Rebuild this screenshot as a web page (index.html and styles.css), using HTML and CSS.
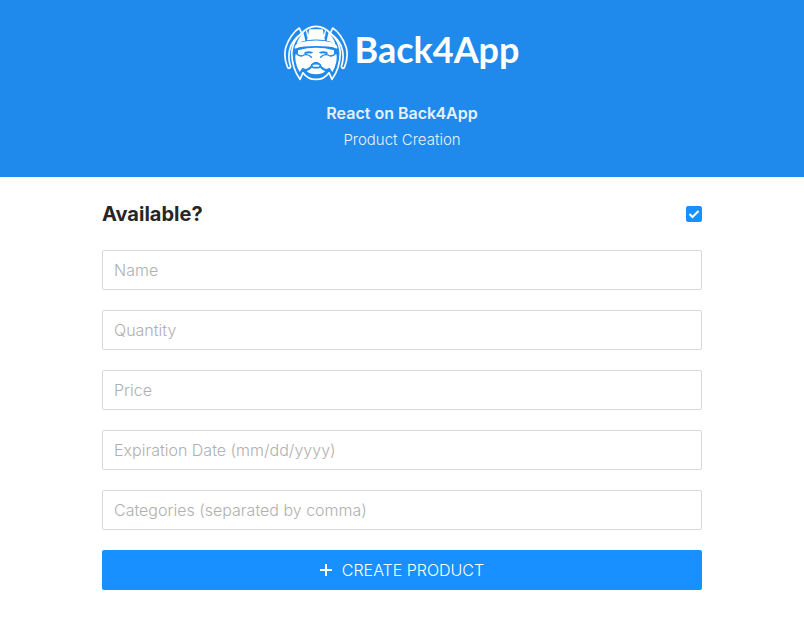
FILE: index.html
```html
<!DOCTYPE html>
<html lang="en">
<head>
    <meta charset="UTF-8">
    <meta name="viewport" content="width=device-width, initial-scale=1.0">
    <title>React on Back4App - Product Creation</title>
    <link rel="stylesheet" href="styles.css">
</head>
<body>
    <header class="header">
        <div class="logo">
            <svg class="logo-icon" viewBox="4 2 192 168" fill="none" stroke="#fff" stroke-width="5" stroke-linecap="round" stroke-linejoin="round" aria-hidden="true">
                <!-- wings -->
                <path d="M57 27L50 11C34 20 16 46 9 70C4 92 8 114 15 130Q21 135 24 127C16 104 17 84 25 64C33 46 44 36 57 27"/>
                <path d="M143 27L150 11C166 20 184 46 191 70C196 92 192 114 185 130Q179 135 176 127C184 104 183 84 175 64C167 46 156 36 143 27"/>
                <!-- head outline -->
                <path d="M57 27C82 -1 118 -1 143 27"/>
                <path d="M57 27C38 42 28 66 27 86C28 122 38 146 52 165L61 145C80 172 120 172 139 145L148 165C162 146 172 122 173 86C172 66 162 42 143 27"/>
                <!-- helmet -->
                <path d="M80 15H120L127 48C110 45 90 45 73 48Z" fill="#fff" stroke="none"/>
                <path d="M63 26L68 49C56 51 48 55 42 60C45 46 52 34 63 26ZM137 26L132 49C144 51 152 55 158 60C155 46 148 34 137 26Z" fill="#fff" stroke="none"/>
                <path d="M72 20L75 36M128 20L125 36" stroke-width="4"/>
                <path d="M38 70C40 62 46 58 54 56C84 49 116 49 146 56C154 58 160 62 162 70C138 60 62 60 38 70Z" fill="#fff"/>
                <!-- face -->
                <path d="M46 78C82 68 118 68 154 78V94H46Z" fill="#fff" stroke="none"/>
                <path d="M68 86Q78 81 88 86M132 86Q122 81 112 86" stroke="#208aec" stroke-width="6"/>
                <!-- moustache -->
                <path d="M38 82C32 106 40 130 51 147L60 133C70 140 82 132 88 122C94 112 106 112 112 122C118 132 130 140 140 133L149 147C160 130 168 106 162 82C158 90 150 95 142 95C130 88 120 92 114 99Q100 92 86 99C80 92 70 88 58 95C50 95 42 90 38 82Z" fill="#fff" stroke="#208aec" stroke-width="4"/>
                <path d="M84 88Q100 78 116 88L112 100Q100 107 88 100Z" fill="#fff" stroke="none"/>
                <!-- mouth and beard -->
                <path d="M72 140C84 138 88 128 94 123H106C112 128 116 138 128 140C118 153 82 153 72 140Z" fill="#fff" stroke="none"/>
                <ellipse cx="100" cy="124" rx="13" ry="6" stroke="#208aec" stroke-width="5" fill="#fff"/>
            </svg>
            <span class="logo-text">Back4App</span>
        </div>
        <h1 class="header-title">React on Back4App</h1>
        <p class="header-subtitle">Product Creation</p>
    </header>

    <main class="container">
        <form class="product-form">
            <div class="available">
                <label for="available">Available?</label>
                <input type="checkbox" id="available" name="available" checked>
            </div>
            <input class="field" type="text" name="name" placeholder="Name" aria-label="Name">
            <input class="field" type="text" name="quantity" placeholder="Quantity" aria-label="Quantity">
            <input class="field" type="text" name="price" placeholder="Price" aria-label="Price">
            <input class="field" type="text" name="expirationDate" placeholder="Expiration Date (mm/dd/yyyy)" aria-label="Expiration Date">
            <input class="field" type="text" name="categories" placeholder="Categories (separated by comma)" aria-label="Categories">
            <button class="create-btn" type="button">
                <svg class="plus-icon" viewBox="0 0 12 12" aria-hidden="true">
                    <path d="M6 0V12M0 6H12" stroke="#fff" stroke-width="2"/>
                </svg>
                CREATE PRODUCT
            </button>
        </form>
    </main>
</body>
</html>
```
FILE: styles.css
```css
* {
    box-sizing: border-box;
}
body {
    font-family: Inter, Roboto, sans-serif;
    font-size: 16px;
    margin: 0;
    background-color: #fff;
    color: #262626;
}
.header {
    background-color: #208aec;
    padding: 25px 20px 24px;
    text-align: center;
    color: #e4f1fd;
}
.logo {
    display: flex;
    justify-content: center;
    align-items: center;
    gap: 6px;
    height: 56px;
}
.logo-icon {
    width: 64px;
    height: 56px;
}
.logo-text {
    font-family: Lato, sans-serif;
    font-size: 36px;
    font-weight: bold;
    line-height: 48px;
    color: #fff;
    padding-bottom: 8px;
}
.header-title {
    margin: 20px 0 0;
    font-size: 16px;
    font-weight: 600;
    line-height: 24px;
}
.header-subtitle {
    margin: 3px 0 1px;
    font-size: 15px;
    font-weight: 300;
    line-height: 24px;
}
.container {
    max-width: 640px;
    margin: 0 auto;
    padding: 20px;
}
.product-form {
    display: flex;
    flex-direction: column;
    gap: 20px;
}
.available {
    display: flex;
    justify-content: space-between;
    align-items: center;
    height: 33px;
    font-size: 20px;
    font-weight: 700;
}
.available input {
    appearance: none;
    width: 16px;
    height: 16px;
    margin: 0;
    border-radius: 2px;
    border: 1px solid #d9d9d9;
    cursor: pointer;
}
.available input:checked {
    border-color: #1890ff;
    background: #1890ff url("data:image/svg+xml,%3Csvg xmlns='http://www.w3.org/2000/svg' viewBox='0 0 14 14'%3E%3Cpath d='M2.5 7L5.5 10L11.5 4' fill='none' stroke='white' stroke-width='2'/%3E%3C/svg%3E") center / 14px no-repeat;
}
.field {
    width: 100%;
    height: 40px;
    padding: 0 11px;
    border: 1px solid #d9d9d9;
    border-radius: 2px;
    font-family: inherit;
    font-size: 16px;
    font-weight: 300;
    color: #262626;
}
.field::placeholder {
    color: #b0b0b0;
}
.field:focus {
    outline: none;
    border-color: #1890ff;
}
.create-btn {
    display: flex;
    justify-content: center;
    align-items: center;
    gap: 10px;
    height: 40px;
    border: none;
    border-radius: 2px;
    background-color: #1890ff;
    color: #fff;
    font-family: inherit;
    font-size: 16px;
    font-weight: 300;
    cursor: pointer;
}
.create-btn:hover {
    background-color: #40a9ff;
}
.plus-icon {
    width: 12px;
    height: 12px;
}
```
